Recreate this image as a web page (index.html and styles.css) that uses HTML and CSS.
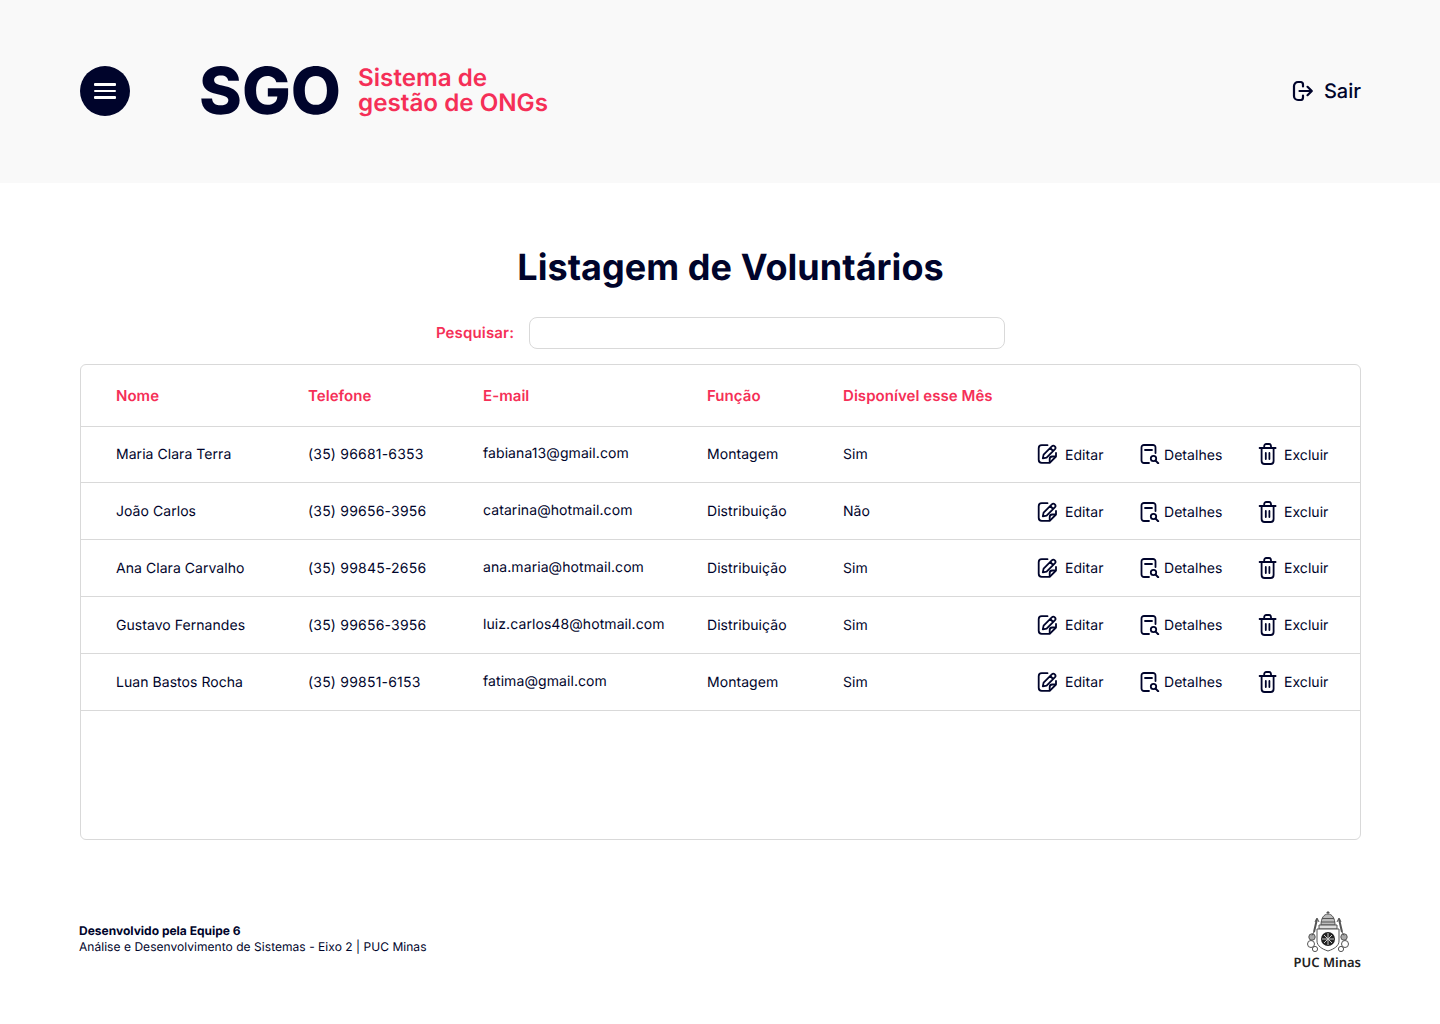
FILE: index.html
```html
<!DOCTYPE html>
<html lang="pt-BR">
<head>
<meta charset="utf-8">
<title>SGO - Listagem de Voluntários</title>
<link rel="stylesheet" href="styles.css">
</head>
<body>
<svg class="sprites" width="0" height="0" aria-hidden="true">
  <symbol id="i-edit" viewBox="0 0 20 20">
    <path d="M10.5 1.2H4.7A3 3 0 0 0 1.7 4.2V15.8A3 3 0 0 0 4.7 18.8H12.7L19 12.5V9" fill="none" stroke="currentColor" stroke-width="1.8" stroke-linecap="round" stroke-linejoin="round"/>
    <path d="M19 12.5H15.2A2.5 2.5 0 0 0 12.7 15V18.8" fill="none" stroke="currentColor" stroke-width="1.8" stroke-linejoin="round"/>
    <path d="M5.8 14.4L6.6 10.6L14.8 2.4A1.9 1.9 0 0 1 17.8 5.4L9.6 13.6Z M13.2 4L16.2 7" fill="none" stroke="currentColor" stroke-width="1.8" stroke-linejoin="round"/>
  </symbol>
  <symbol id="i-detail" viewBox="0 0 20 20">
    <path d="M9 19H4A2.5 2.5 0 0 1 1.5 16.5V3.5A2.5 2.5 0 0 1 4 1H13A2.5 2.5 0 0 1 15.5 3.5V9" fill="none" stroke="currentColor" stroke-width="1.8" stroke-linecap="round"/>
    <path d="M5 6H12" fill="none" stroke="currentColor" stroke-width="1.8" stroke-linecap="round"/>
    <circle cx="13.5" cy="14.5" r="2.7" fill="none" stroke="currentColor" stroke-width="1.8"/>
    <path d="M15.6 16.6L18.2 19.2" fill="none" stroke="currentColor" stroke-width="2" stroke-linecap="round"/>
  </symbol>
  <symbol id="i-trash" viewBox="0 0 20 22">
    <path d="M1.6 5H17.6M6.2 5V3A2 2 0 0 1 8.2 1H11A2 2 0 0 1 13 3V5" fill="none" stroke="currentColor" stroke-width="1.8" stroke-linecap="round"/>
    <path d="M3.6 5V18A3 3 0 0 0 6.6 21H12.6A3 3 0 0 0 15.6 18V5" fill="none" stroke="currentColor" stroke-width="1.8"/>
    <path d="M7.8 10V16M11.4 10V16" fill="none" stroke="currentColor" stroke-width="1.8" stroke-linecap="round"/>
  </symbol>
</svg>

<header class="topbar">
  <button class="menu-btn" aria-label="Menu">
    <span class="menu-line"></span><span class="menu-line"></span><span class="menu-line"></span>
  </button>
  <div class="brand">
    <span class="brand-mark">SGO</span>
    <span class="brand-text">Sistema de<br>gestão de ONGs</span>
  </div>
  <a class="logout" href="#">
    <svg class="logout-icon" viewBox="0 0 22 22">
      <path d="M9 2H6A4 4 0 0 0 2 6V16A4 4 0 0 0 6 20H9A2.5 2.5 0 0 0 11 17.5V15.5M11 6.5V4.5A2.5 2.5 0 0 0 9 2" fill="none" stroke="currentColor" stroke-width="2.2" stroke-linecap="round"/>
      <path d="M7.5 11H19.5M15.5 6.8L19.8 11L15.5 15.2" fill="none" stroke="currentColor" stroke-width="2.2" stroke-linecap="round" stroke-linejoin="round"/>
    </svg>
    <span>Sair</span>
  </a>
</header>

<main class="content">
  <h1 class="title">Listagem de Voluntários</h1>
  <form class="search">
    <label class="search-label" for="q">Pesquisar:</label>
    <input class="search-input" id="q" type="text">
  </form>
  <div class="table-box">
    <table class="table">
      <colgroup>
        <col class="c-name"><col class="c-phone"><col class="c-mail"><col class="c-role"><col class="c-avail"><col class="c-edit"><col class="c-detail"><col class="c-del">
      </colgroup>
      <thead>
        <tr><th>Nome</th><th>Telefone</th><th>E-mail</th><th>Função</th><th colspan="4">Disponível esse Mês</th></tr>
      </thead>
      <tbody>
        <tr class="row-first">
          <td>Maria Clara Terra</td><td class="phone">(35) 96681-6353</td><td class="mail">fabiana13@gmail.com</td><td>Montagem</td><td>Sim</td>
          <td class="act"><a class="action"><svg class="ico"><use href="#i-edit"/></svg><span>Editar</span></a></td>
          <td class="act"><a class="action tight"><svg class="ico"><use href="#i-detail"/></svg><span>Detalhes</span></a></td>
          <td class="act"><a class="action trash"><svg class="ico"><use href="#i-trash"/></svg><span>Excluir</span></a></td>
        </tr>
        <tr>
          <td>João Carlos</td><td class="phone">(35) 99656-3956</td><td class="mail">catarina@hotmail.com</td><td>Distribuição</td><td>Não</td>
          <td class="act low"><a class="action"><svg class="ico"><use href="#i-edit"/></svg><span>Editar</span></a></td>
          <td class="act low"><a class="action tight"><svg class="ico"><use href="#i-detail"/></svg><span>Detalhes</span></a></td>
          <td class="act low"><a class="action trash"><svg class="ico"><use href="#i-trash"/></svg><span>Excluir</span></a></td>
        </tr>
        <tr>
          <td>Ana Clara Carvalho</td><td class="phone">(35) 99845-2656</td><td class="mail">ana.maria@hotmail.com</td><td>Distribuição</td><td>Sim</td>
          <td class="act"><a class="action"><svg class="ico"><use href="#i-edit"/></svg><span>Editar</span></a></td>
          <td class="act"><a class="action tight"><svg class="ico"><use href="#i-detail"/></svg><span>Detalhes</span></a></td>
          <td class="act"><a class="action trash"><svg class="ico"><use href="#i-trash"/></svg><span>Excluir</span></a></td>
        </tr>
        <tr>
          <td>Gustavo Fernandes</td><td class="phone">(35) 99656-3956</td><td class="mail">luiz.carlos48@hotmail.com</td><td>Distribuição</td><td>Sim</td>
          <td class="act"><a class="action"><svg class="ico"><use href="#i-edit"/></svg><span>Editar</span></a></td>
          <td class="act"><a class="action tight"><svg class="ico"><use href="#i-detail"/></svg><span>Detalhes</span></a></td>
          <td class="act"><a class="action trash"><svg class="ico"><use href="#i-trash"/></svg><span>Excluir</span></a></td>
        </tr>
        <tr>
          <td>Luan Bastos Rocha</td><td class="phone">(35) 99851-6153</td><td class="mail">fatima@gmail.com</td><td>Montagem</td><td>Sim</td>
          <td class="act"><a class="action"><svg class="ico"><use href="#i-edit"/></svg><span>Editar</span></a></td>
          <td class="act"><a class="action tight"><svg class="ico"><use href="#i-detail"/></svg><span>Detalhes</span></a></td>
          <td class="act"><a class="action trash"><svg class="ico"><use href="#i-trash"/></svg><span>Excluir</span></a></td>
        </tr>
      </tbody>
    </table>
  </div>
</main>

<footer class="footer">
  <div class="credits">
    <strong class="credits-team">Desenvolvido pela Equipe 6</strong>
    <span>Análise e Desenvolvimento de Sistemas - Eixo 2 | PUC Minas</span>
  </div>
  <div class="puc">
    <svg class="puc-crest" viewBox="0 0 44 44">
      <g fill="none" stroke="#555" stroke-width="1">
        <path d="M22 1V4M20.5 2.5H23.5"/>
        <path d="M15 15C15 8 18 4 22 4C26 4 29 8 29 15Z" fill="#bbb"/>
        <path d="M16 8.5H28M15 12H29"/>
        <path d="M13 15H31V19H13Z" fill="#ddd"/>
        <path d="M11 9L8 22M33 9L36 22" stroke-width="2"/>
        <path d="M9 12L11 8L13 12M31 12L33 8L35 12"/>
        <path d="M11 19H33V31C33 36 28 39 22 41C16 39 11 36 11 31Z" fill="#fff"/>
        <circle cx="6" cy="27" r="3.2" fill="#aaa"/><circle cx="38" cy="27" r="3.2" fill="#aaa"/>
        <circle cx="5" cy="34" r="3.5"/><circle cx="39" cy="34" r="3.5"/>
        <circle cx="9" cy="39" r="2.6"/><circle cx="35" cy="39" r="2.6"/>
        <path d="M8 22L6 25.5M36 22L38 25.5"/>
      </g>
      <circle cx="22" cy="29" r="7" fill="#222"/>
      <path d="M22 23V35M16 29H28M18 25L26 33M26 25L18 33" stroke="#ccc" stroke-width="1"/>
    </svg>
    <span class="puc-name">PUC Minas</span>
  </div>
</footer>
</body>
</html>
```

FILE: styles.css
```css
* { box-sizing: border-box; }

html, body { margin: 0; padding: 0; }

body {
  background: #fff;
  color: #00042b;
  font-family: Inter, "Liberation Sans", sans-serif;
  height: 1024px;
  overflow: hidden;
  text-rendering: geometricPrecision;
}

.sprites { position: absolute; }

.topbar {
  display: flex;
  align-items: center;
  height: 183px;
  padding: 0 79px 1px 80px;
  background: #f9f9f9;
}

.menu-btn {
  display: flex;
  flex-direction: column;
  align-items: center;
  justify-content: center;
  gap: 4px;
  width: 50px;
  height: 50px;
  padding: 0;
  border: 0;
  border-radius: 50%;
  background: #00042b;
}

.menu-line {
  display: block;
  width: 22px;
  height: 2.5px;
  border-radius: 1px;
  background: #fff;
}

.brand {
  display: flex;
  align-items: center;
  gap: 17px;
  margin-left: 69px;
}

.brand-mark {
  font-size: 65px;
  font-weight: 800;
  line-height: 64px;
}

.brand-text {
  color: #f52f57;
  font-size: 24.2px;
  font-weight: 600;
  line-height: 25px;
  padding-bottom: 2px;
}

.logout {
  display: flex;
  align-items: center;
  gap: 10px;
  margin-left: auto;
  color: #00042b;
  font-size: 20px;
  font-weight: 500;
  text-decoration: none;
}

.logout-icon { width: 22px; height: 22px; }

.content { padding: 62px 79px 0 80px; }

.title {
  margin: 0 0 28px 20px;
  font-size: 36px;
  font-weight: 700;
  letter-spacing: 0.05px;
  line-height: 44px;
  text-align: center;
}

.search {
  display: flex;
  align-items: center;
  justify-content: center;
  gap: 15px;
  margin-bottom: 15px;
}

.search-label {
  color: #f52f57;
  font-size: 15px;
  font-weight: 600;
  letter-spacing: 0.15px;
  line-height: 30px;
  padding-bottom: 1px;
}

.search-input {
  width: 476px;
  height: 32px;
  border: 1px solid #d9d9d9;
  border-radius: 8px;
  background: #fff;
}

.table-box {
  height: 476px;
  border: 1px solid #d9d9d9;
  border-radius: 6px;
}

.table {
  width: 100%;
  table-layout: fixed;
  border-collapse: collapse;
}

.c-name { width: 227px; }
.c-phone { width: 175px; }
.c-mail { width: 224px; }
.c-role { width: 136px; }
.c-avail { width: 194px; }
.c-edit { width: 103px; }
.c-detail { width: 118px; }

.table th,
.table td {
  padding: 2px 0 0;
  text-align: left;
  border-bottom: 1px solid #d9d9d9;
}

.table th:first-child,
.table td:first-child { padding-left: 35px; }

.table th {
  height: 61px;
  padding-top: 0;
  color: #f52f57;
  font-size: 15px;
  font-weight: 600;
  letter-spacing: 0.05px;
}

.table td {
  height: 57px;
  font-size: 14px;
  font-weight: 400;
  letter-spacing: 0.05px;
}

.table .phone { letter-spacing: 0.2px; }

.table .mail { padding-bottom: 2px; letter-spacing: 0.08px; }

.table .act.low { padding-top: 4px; }

.table .row-first td { height: 56px; padding-bottom: 2px; }

.table .row-first .mail { padding-bottom: 4px; }

.table .row-first .act { padding-bottom: 0; }

.action {
  display: flex;
  align-items: center;
  gap: 8px;
}

.action.tight { gap: 4px; }

.action.trash { gap: 6px; }

.ico { width: 20px; height: 20px; flex: none; transform: translateY(-1px); }

.action.trash .ico { height: 22px; }

.footer {
  display: flex;
  align-items: flex-end;
  justify-content: space-between;
  padding: 70px 79px 0 79px;
}

.credits {
  display: flex;
  flex-direction: column;
  font-size: 12px;
  letter-spacing: 0.04px;
  line-height: 16px;
  padding-bottom: 15px;
}

.credits-team { font-weight: 700; letter-spacing: 0; }

.puc {
  display: flex;
  flex-direction: column;
  align-items: center;
}

.puc-crest { width: 44px; height: 44px; margin-left: 2px; }

.puc-name {
  color: #222;
  font-family: "Noto Sans", sans-serif;
  font-size: 13px;
  font-weight: 600;
  line-height: 16px;
}
```
